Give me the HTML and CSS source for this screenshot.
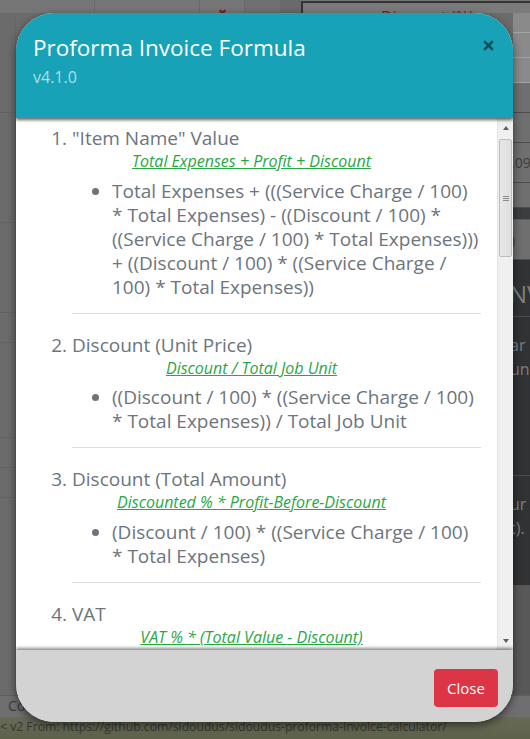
FILE: index.html
```html
<!DOCTYPE html>
<html lang="en">
<head>
<meta charset="utf-8">
<title>Proforma Invoice Formula</title>
<link rel="stylesheet" href="styles.css">
</head>
<body>
<div class="page">
  <div class="topbar">
    <div class="tb-cell tb-w95"></div>
    <div class="tb-cell tb-w105"></div>
    <div class="tb-cell tb-w45"><span class="tb-x">&#x2716;</span></div>
    <div class="tb-cell tb-w36"></div>
    <div class="tb-gap"></div>
    <div class="tb-box"><span class="tb-label">Discount (%)</span></div>
  </div>
  <div class="main">
    <div class="side-left">
      <div class="sl-row sl-h100"></div>
      <div class="sl-row sl-h110"></div>
      <div class="sl-row sl-h90"></div>
      <div class="sl-row sl-h30"></div>
      <div class="sl-row sl-h95"></div>
      <div class="sl-row sl-h30"></div>
      <div class="sl-row sl-h30"></div>
    </div>
    <div class="center"></div>
    <div class="side-right">
      <div class="sr-block sr-light sr-h20"></div>
      <div class="sr-block sr-light sr-h25"></div>
      <div class="sr-block sr-light sr-h25"></div>
      <div class="sr-block sr-mid sr-h30"></div>
      <div class="sr-block sr-mid sr-h30"></div>
      <div class="sr-block sr-mid sr-h40"><span class="sr-text">.09</span></div>
      <div class="sr-block sr-mid sr-h25"></div>
      <div class="sr-block sr-band sr-h12"></div>
      <div class="sr-block sr-mid sr-h40"><span class="sr-text">)</span></div>
      <div class="sr-dark">
        <div class="sr-d-row sr-big">NV</div>
        <div class="sr-d-sep"></div>
        <div class="sr-d-row sr-pad">ar</div>
        <div class="sr-d-row">un</div>
        <div class="sr-d-space"></div>
        <div class="sr-d-sep"></div>
        <div class="sr-d-row sr-pad">ur</div>
        <div class="sr-d-row">t).</div>
      </div>
      <div class="sr-block sr-low"></div>
    </div>
  </div>
  <div class="foot1">Co</div>
  <div class="foot2">&lt; v2 From: https://github.com/sidoudus/sidoudus-proforma-invoice-calculator/</div>
</div>

<div class="modal" role="dialog" aria-labelledby="modal-title">
  <div class="modal-header">
    <div class="titles">
      <h1 id="modal-title" class="modal-title">Proforma Invoice Formula</h1>
      <div class="version">v4.1.0</div>
    </div>
    <button class="close" type="button" aria-label="Close">
      <svg width="11" height="11" viewBox="0 0 11 11" aria-hidden="true"><path d="M1.2 1.2 L9.8 9.8 M9.8 1.2 L1.2 9.8" stroke="currentColor" stroke-width="2.6" stroke-linecap="butt"/></svg>
    </button>
  </div>
  <div class="modal-body">
    <div class="content">
      <ol class="formulas">
        <li class="section">
          <div class="f-title">"Item Name" Value</div>
          <div class="f-summary"><span>Total Expenses + Profit + Discount</span></div>
          <ul class="f-detail">
            <li>Total Expenses + (((Service Charge / 100) * Total Expenses) - ((Discount / 100) * ((Service Charge / 100) * Total Expenses))) + ((Discount / 100) * ((Service Charge / 100) * Total Expenses))</li>
          </ul>
        </li>
        <li class="section">
          <div class="f-title">Discount (Unit Price)</div>
          <div class="f-summary"><span>Discount / Total Job Unit</span></div>
          <ul class="f-detail">
            <li>((Discount / 100) * ((Service Charge / 100) * Total Expenses)) / Total Job Unit</li>
          </ul>
        </li>
        <li class="section">
          <div class="f-title">Discount (Total Amount)</div>
          <div class="f-summary"><span>Discounted % * Profit-Before-Discount</span></div>
          <ul class="f-detail">
            <li>(Discount / 100) * ((Service Charge / 100) * Total Expenses)</li>
          </ul>
        </li>
        <li class="section">
          <div class="f-title">VAT</div>
          <div class="f-summary"><span>VAT % * (Total Value - Discount)</span></div>
          <ul class="f-detail">
            <li>(VAT / 100) * (Total Value - Discount)</li>
          </ul>
        </li>
      </ol>
    </div>
    <div class="scrollbar" aria-hidden="true">
      <div class="sb-btn"><span class="sb-up"></span></div>
      <div class="sb-track">
        <div class="sb-thumb"><span class="grip"></span><span class="grip"></span><span class="grip"></span></div>
      </div>
      <div class="sb-btn"><span class="sb-down"></span></div>
    </div>
  </div>
  <div class="modal-footer">
    <button class="btn-close" type="button">Close</button>
  </div>
</div>
</body>
</html>
```

FILE: styles.css
```css
* { box-sizing: border-box; }
html, body { margin: 0; padding: 0; }
body {
  width: 530px;
  height: 739px;
  overflow: hidden;
  font-family: "Open Sans", "Noto Sans", sans-serif;
  background: #6c6c6c;
}

/* ---------- background page (dimmed) ---------- */
.page {
  width: 530px;
  height: 739px;
  display: flex;
  flex-direction: column;
}
.topbar {
  height: 13px;
  display: flex;
  background: #767676;
  flex: none;
}
.tb-cell {
  border-right: 1px solid #6a6a6a;
  height: 13px;
}
.tb-w95 { width: 95px; }
.tb-w105 { width: 105px; }
.tb-w45 { width: 45px; text-align: center; }
.tb-w36 { width: 36px; background: #707070; }
.tb-gap { width: 20px; background: #6a6a6a; }
.tb-x {
  color: #7d1d24;
  font-size: 11px;
  line-height: 13px;
  display: inline-block;
  margin-top: 2px;
}
.tb-box {
  flex: 1;
  border-top: 2px solid #333;
  border-left: 2px solid #333;
  margin-top: 1px;
  background: #7b7b7b;
  overflow: hidden;
  padding-left: 78px;
}
.tb-label {
  color: #7d1d24;
  font-size: 16px;
  line-height: 16px;
  display: block;
  margin-top: 6px;
}

.main {
  flex: 1;
  display: flex;
}
.side-left {
  width: 16px;
  background: #6b6b6b;
  display: flex;
  flex-direction: column;
  border-right: 1px solid #666;
}
.sl-row { border-bottom: 1px solid #626262; }
.sl-h100 { height: 100px; }
.sl-h110 { height: 110px; }
.sl-h90 { height: 90px; }
.sl-h30 { height: 30px; }
.sl-h95 { height: 95px; }
.center { flex: 1; background: #6c6c6c; }
.side-right {
  width: 17px;
  display: flex;
  flex-direction: column;
  background: #595959;
  overflow: hidden;
  white-space: nowrap;
}
.sr-block { flex: none; border-bottom: 1px solid #5c5c5c; overflow: hidden; }
.sr-light { background: #8a8a8a; border-bottom-color: #a3a3a3; }
.sr-mid { background: #6f6f6f; border-bottom-color: #4e4e4e; }
.sr-band { background: #3b3d40; }
.sr-h20 { height: 20px; }
.sr-h25 { height: 25px; }
.sr-h30 { height: 30px; }
.sr-h40 { height: 40px; }
.sr-h12 { height: 12px; }
.sr-text {
  display: block;
  color: #3c3c3c;
  font-size: 14px;
  line-height: 40px;
  margin-left: -2px;
}
.sr-dark {
  flex: none;
  height: 325px;
  background: #303234;
  display: flex;
  flex-direction: column;
}
.sr-d-row {
  color: #7d7f81;
  font-size: 16px;
  line-height: 24px;
  margin-left: -3px;
}
.sr-big { font-size: 24px; line-height: 32px; margin-top: 18px; margin-left: -4px; }
.sr-pad { margin-top: 16px; }
.sr-d-sep { height: 1px; background: #4b4d4f; margin-top: 6px; }
.sr-d-space { height: 88px; }
.sr-low { flex: 1; background: #585858; }

.foot1 {
  height: 22px;
  flex: none;
  background: #6f6f6f;
  border-top: 1px solid #5f5f5f;
  color: #3b3b3b;
  font-size: 14px;
  line-height: 20px;
  padding-left: 8px;
}
.foot2 {
  height: 22px;
  flex: none;
  background: linear-gradient(#676a55, #5e614a);
  color: #363732;
  font-size: 12.2px;
  line-height: 20px;
  white-space: nowrap;
}

/* ---------- modal ---------- */
.modal {
  position: absolute;
  left: 16px;
  top: 13px;
  width: 497px;
  height: 709px;
  display: flex;
  flex-direction: column;
  border-radius: 38px;
  overflow: hidden;
  background: #fff;
  box-shadow: 0 3px 9px rgba(0, 0, 0, 0.55);
}
.modal-header {
  height: 105px;
  flex: none;
  background: #17a2b8;
  display: flex;
  justify-content: space-between;
  align-items: flex-start;
  padding: 21px 19px 0 17px;
  position: relative;
  z-index: 2;
  box-shadow: 0 2px 3px rgba(0, 0, 0, 0.6);
}
.modal-title {
  margin: 0;
  font-weight: 400;
  font-size: 22.5px;
  line-height: 27px;
  color: #fff;
}
.version {
  margin-top: 6px;
  font-size: 16px;
  line-height: 20px;
  color: rgba(255, 255, 255, 0.66);
}
.close {
  background: none;
  border: 0;
  padding: 0;
  margin: 6px 0 0 0;
  width: 11px;
  height: 11px;
  color: rgba(0, 0, 0, 0.5);
  cursor: pointer;
  display: block;
}
.close svg { display: block; }

.modal-body {
  flex: 1;
  display: flex;
  min-height: 0;
  background: #fff;
}
.content {
  flex: 1;
  overflow: hidden;
  padding: 6px 16px 0 16px;
  color: #6c757d;
}
.formulas {
  margin: 0;
  padding-left: 40px;
}
.section {
  font-size: 19px;
  line-height: 28px;
  padding-bottom: 14px;
  border-bottom: 1px solid #dedede;
  margin-bottom: 17px;
}
.f-title { line-height: 28px; }
.f-summary {
  font-size: 16px;
  line-height: 16px;
  padding-top: 1px;
  font-style: italic;
  color: #28a745;
  text-align: center;
  padding-right: 50px;
}
.f-summary span { text-decoration: underline; }
.f-detail {
  margin: 9.5px 1px 0 0;
  padding-left: 40px;
  font-size: 19px;
  line-height: 24px;
  list-style-type: disc;
}

/* fake scrollbar */
.scrollbar {
  width: 16px;
  flex: none;
  background: #f0f0f0;
  border-left: 1px solid #e4e4e4;
  display: flex;
  flex-direction: column;
}
.sb-btn {
  height: 17px;
  flex: none;
  display: flex;
  align-items: center;
  justify-content: center;
}
.sb-up, .sb-down {
  width: 0;
  height: 0;
  border-left: 3.5px solid transparent;
  border-right: 3.5px solid transparent;
}
.sb-up { border-bottom: 4px solid #606060; margin-top: 2px; }
.sb-down { border-top: 4px solid #606060; margin-bottom: 2px; }
.sb-track { flex: 1; padding: 4px 1px 0 1px; }
.sb-thumb {
  height: 118px;
  background: linear-gradient(90deg, #e8e8e8, #dedede);
  border: 1px solid #bdbdbd;
  border-radius: 2px;
  display: flex;
  flex-direction: column;
  align-items: center;
  justify-content: center;
  gap: 1px;
}
.grip { width: 6px; height: 1px; background: #8a8a8a; }

.modal-footer {
  height: 72px;
  flex: none;
  background: #d3d3d3;
  display: flex;
  justify-content: flex-end;
  align-items: flex-start;
  padding: 19px 15px 0 0;
  position: relative;
  z-index: 2;
  box-shadow: 0 -2px 3px rgba(0, 0, 0, 0.45);
}
.btn-close {
  width: 64px;
  height: 38px;
  background: #dc3545;
  border: 0;
  border-radius: 4px;
  color: #fff;
  font-family: "Open Sans", sans-serif;
  font-size: 15px;
  line-height: 38px;
  padding: 0;
  cursor: pointer;
}
```
